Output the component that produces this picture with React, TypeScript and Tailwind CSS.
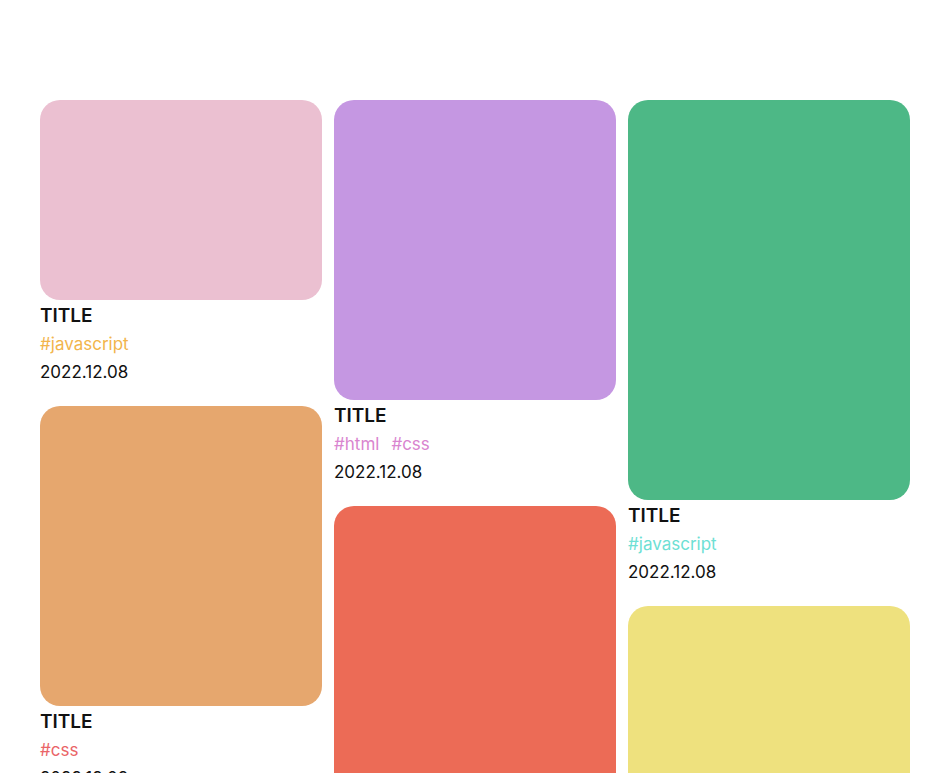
import React from 'react';

type Post = { color: string; h: string; tags: string[]; tagColor: string };

const columns: Post[][] = [
  [
    { color: 'bg-[#ebc0d1]', h: 'h-[200px]', tags: ['#javascript'], tagColor: 'text-[#f2b54c]' },
    { color: 'bg-[#e6a76e]', h: 'h-[300px]', tags: ['#css'], tagColor: 'text-[#ea6467]' },
    { color: 'bg-[#8fc6e8]', h: 'h-[250px]', tags: ['#react'], tagColor: 'text-[#6a9ee0]' },
    { color: 'bg-[#c597e2]', h: 'h-[200px]', tags: ['#html'], tagColor: 'text-[#d985cf]' },
  ],
  [
    { color: 'bg-[#c597e2]', h: 'h-[300px]', tags: ['#html', '#css'], tagColor: 'text-[#d985cf]' },
    { color: 'bg-[#ec6b56]', h: 'h-[400px]', tags: ['#javascript'], tagColor: 'text-[#f2b54c]' },
    { color: 'bg-[#ebc0d1]', h: 'h-[300px]', tags: ['#css'], tagColor: 'text-[#ea6467]' },
  ],
  [
    { color: 'bg-[#4db886]', h: 'h-[400px]', tags: ['#javascript'], tagColor: 'text-[#6de0d4]' },
    { color: 'bg-[#eee17e]', h: 'h-[300px]', tags: ['#html'], tagColor: 'text-[#d985cf]' },
    { color: 'bg-[#e6a76e]', h: 'h-[300px]', tags: ['#css'], tagColor: 'text-[#ea6467]' },
  ],
];

function Card({ post }: { post: Post }) {
  return (
    <div className="mb-[20px]">
      <div className={`${post.h} ${post.color} rounded-[20px]`} />
      <h2 className="mt-[2px] text-[19px] leading-[28px] font-semibold text-[#111]">TITLE</h2>
      <div className={`flex gap-3 text-[17px] leading-[28px] ${post.tagColor}`}>
        {post.tags.map((t) => (
          <span key={t}>{t}</span>
        ))}
      </div>
      <p className="text-[17px] leading-[28px] text-[#111]">2022.12.08</p>
    </div>
  );
}

export default function App() {
  return (
    <div className="min-h-screen bg-white pt-[100px] pl-[40px] pb-[40px]" style={{ fontFamily: 'Inter, "Noto Sans", sans-serif' }}>
      <div className="flex gap-3 items-start">
        {columns.map((col, i) => (
          <div key={i} className="w-[282px] flex flex-col">
            {col.map((p, j) => (
              <Card key={j} post={p} />
            ))}
          </div>
        ))}
      </div>
    </div>
  );
}
